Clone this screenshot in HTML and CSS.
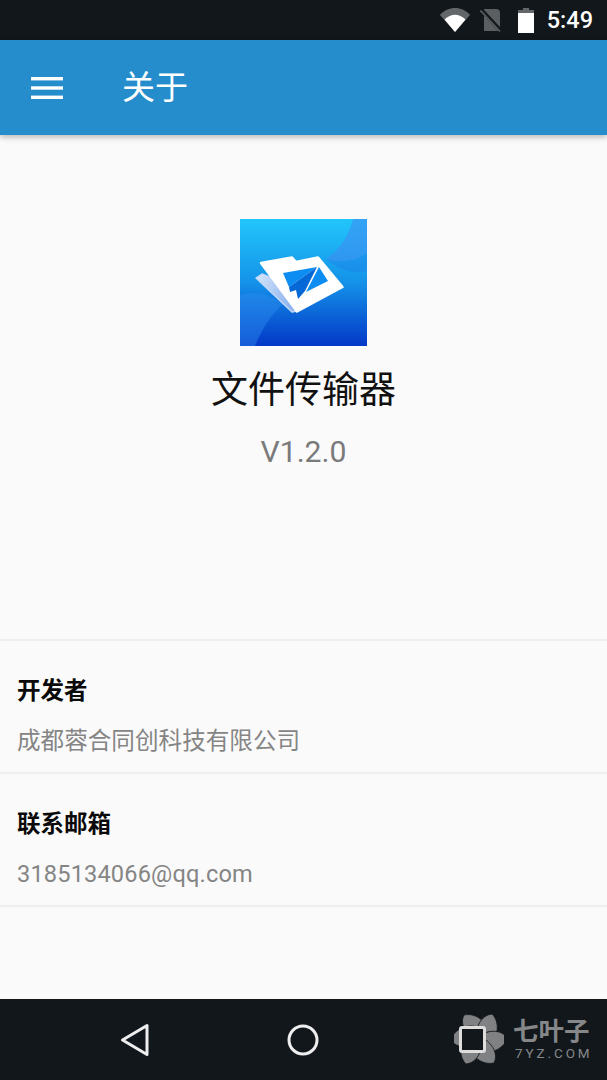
FILE: index.html
```html
<!doctype html>
<html lang="zh-CN">
<head>
  <meta charset="utf-8">
  <title>关于</title>
  <link rel="stylesheet" href="styles.css">
</head>
<body>
  <div class="screen">
    <div class="status-bar">
      <svg class="wifi" width="30" height="24" viewBox="0 0 30 24">
        <path d="M0 7 C8 -2.3 22 -2.3 30 7 L15 24 Z" fill="#646769"/>
        <path d="M4.5 11.5 C11 5 19 5 25.5 11.5 L15 24 Z" fill="#fff"/>
      </svg>
      <svg class="sim" width="22" height="24" viewBox="0 0 22 24">
        <path d="M4 1 H16 Q20 1 20 5 V23 H4 Z" fill="#5c5f62"/>
        <path d="M1.5 2 L21 23" stroke="#12171c" stroke-width="4"/>
        <path d="M0.5 2.5 L20 23.5" stroke="#5c5f62" stroke-width="1.6"/>
      </svg>
      <svg class="battery" width="16" height="25" viewBox="0 0 16 25">
        <path d="M5 0 H11 V2 H16 V5 H0 V2 H5 Z" fill="#646769"/>
        <rect x="0" y="5" width="16" height="20" fill="#fff"/>
      </svg>
      <span class="clock">5:49</span>
    </div>

    <header class="app-bar">
      <svg class="menu-icon" width="32" height="22" viewBox="0 0 32 22">
        <rect x="0" y="0" width="32" height="3.4" fill="#fff"/>
        <rect x="0" y="9.3" width="32" height="3.4" fill="#fff"/>
        <rect x="0" y="18.6" width="32" height="3.4" fill="#fff"/>
      </svg>
      <h1 class="app-title">关于</h1>
    </header>

    <main class="content">
      <section class="about">
        <svg class="app-logo" width="127" height="127" viewBox="0 0 127 127">
          <defs>
            <linearGradient id="logo-bg" x1="0" y1="0" x2="0" y2="1">
              <stop offset="0" stop-color="#22c6fb"/>
              <stop offset="0.5" stop-color="#1492e8"/>
              <stop offset="1" stop-color="#0338c8"/>
            </linearGradient>
            <linearGradient id="logo-sheet" x1="0" y1="0" x2="1" y2="0.4">
              <stop offset="0" stop-color="#d6e6fb"/>
              <stop offset="1" stop-color="#8fb4ee"/>
            </linearGradient>
          </defs>
          <rect width="127" height="127" fill="url(#logo-bg)"/>
          <path d="M113 0 C108 20 98 32 86 40 C100 44 115 43 127 34 L127 0 Z" fill="#3f8ef2" opacity="0.6"/>
          <path d="M86 40 C100 44 115 43 127 34 L127 52 C112 56 98 50 86 40 Z" fill="#1f7ce8" opacity="0.4"/>
          <path d="M0 76 C15 72 30 75 43 85 C30 97 22 110 15 127 L0 127 Z" fill="#2f8cf0" opacity="0.45"/>
          <path d="M16 59 L22 55 L32 59 L57 92 L52 93 Z" fill="url(#logo-sheet)" stroke="#c4d9f7" stroke-width="1.5" stroke-linejoin="round"/>
          <path d="M21 44 L52 38.5 L56 43 L78 38.5 L102.5 68 L57 92.5 Z" fill="#fff" stroke="#fff" stroke-width="2.5" stroke-linejoin="round"/>
          <path d="M43 54 L77 48 L49 68 Z" fill="#0d8df2"/>
          <path d="M49 68 L77 48 L65 72 L58 80 L56 71 L50 73 Z" fill="#0568d6"/>
          <path d="M79 48 L88 62 L66 73 Z" fill="#0d8df2"/>
        </svg>
        <h2 class="about-name">文件传输器</h2>
        <p class="about-version">V1.2.0</p>
      </section>

      <section class="info-row">
        <div class="info-label">开发者</div>
        <div class="info-value">成都蓉合同创科技有限公司</div>
      </section>
      <section class="info-row">
        <div class="info-label">联系邮箱</div>
        <div class="info-value info-mail">3185134066@qq.com</div>
      </section>
    </main>

    <nav class="nav-bar">
      <svg class="nav-back" width="30" height="34" viewBox="0 0 30 34">
        <path d="M2.5 17 L27 2.5 V31.5 Z" fill="none" stroke="#eee" stroke-width="3" stroke-linejoin="round"/>
      </svg>
      <svg class="nav-home" width="32" height="32" viewBox="0 0 32 32">
        <circle cx="16" cy="16" r="14" fill="none" stroke="#eee" stroke-width="3"/>
      </svg>
      <svg class="nav-recent" width="27" height="27" viewBox="0 0 27 27">
        <rect x="1.5" y="1.5" width="24" height="24" rx="1.5" fill="#12171c" stroke="#ddd" stroke-width="3"/>
      </svg>
    </nav>

    <div class="watermark">
      <svg class="watermark-leaf" width="50" height="50" viewBox="0 0 50 50">
        <defs>
          <path id="leaf-blade" d="M25 28 C13 23 5 11 10 1 C24 -2 37 11 35 26 Z"/>
        </defs>
        <g fill="#7f8182" stroke="#12171c" stroke-width="0.8">
          <use href="#leaf-blade"/>
          <use href="#leaf-blade" transform="rotate(60 25 25)"/>
          <use href="#leaf-blade" transform="rotate(120 25 25)"/>
          <use href="#leaf-blade" transform="rotate(180 25 25)"/>
          <use href="#leaf-blade" transform="rotate(240 25 25)"/>
          <use href="#leaf-blade" transform="rotate(300 25 25)"/>
        </g>
      </svg>
      <div class="watermark-text">
        <span class="watermark-cn">七叶子</span>
        <span class="watermark-en">7YZ.COM</span>
      </div>
    </div>
  </div>
</body>
</html>
```

FILE: styles.css
```css
html, body {
  margin: 0;
  padding: 0;
  background: #fafafa;
}
.screen {
  position: relative;
  display: flex;
  flex-flow: column nowrap;
  width: 607px;
  height: 1080px;
  overflow: hidden;
  font-family: Roboto, "Noto Sans CJK SC", sans-serif;
}
.status-bar {
  flex: none;
  height: 40px;
  display: flex;
  align-items: center;
  justify-content: flex-end;
  padding-right: 14px;
  background: #12171c;
  color: #fff;
}
.wifi {
  margin-right: 10px;
}
.sim {
  margin-right: 16px;
}
.battery {
  margin-right: 13px;
}
.clock {
  font-size: 23.5px;
  font-weight: 500;
  line-height: 40px;
}
.app-bar {
  position: relative;
  z-index: 1;
  flex: none;
  height: 95px;
  display: flex;
  align-items: center;
  padding-left: 31px;
  background: #268dcd;
  box-shadow: 0 2px 6px rgba(0, 0, 0, 0.28);
}
.menu-icon {
  margin-right: 59px;
}
.app-title {
  margin: 0;
  font-size: 33px;
  font-weight: 400;
  line-height: 46px;
  color: #fff;
}
.content {
  flex: auto;
  background: #fafafa;
}
.about {
  height: 504px;
  display: flex;
  flex-flow: column nowrap;
  align-items: center;
  box-sizing: border-box;
  padding-top: 84px;
}
.app-logo {
  display: block;
}
.about-name {
  margin: 18px 0 0;
  font-size: 37px;
  font-weight: 400;
  line-height: 54px;
  color: #111;
}
.about-version {
  margin: 14px 0 0;
  font-size: 30.2px;
  line-height: 40px;
  color: #7a7a7a;
}
.info-row {
  height: 133px;
  box-sizing: border-box;
  padding: 33px 17px 0;
  border-top: 2px solid #efefef;
}
.info-row:last-child {
  height: 135px;
  border-bottom: 2px solid #efefef;
}
.info-label {
  font-size: 23.5px;
  font-weight: 700;
  line-height: 34px;
  color: #0a0a0a;
}
.info-value {
  margin-top: 16px;
  font-size: 23.6px;
  line-height: 34px;
  color: #858585;
}
.info-mail {
  letter-spacing: 0.15px;
}
.nav-bar {
  flex: none;
  height: 81px;
  display: flex;
  align-items: center;
  background: #12171c;
}
.nav-back {
  margin-left: 120px;
}
.nav-home {
  margin-left: 137px;
}
.nav-recent {
  position: relative;
  z-index: 2;
  margin-left: 140px;
}
.watermark {
  position: absolute;
  left: 454px;
  top: 1014px;
  display: flex;
  align-items: center;
}
.watermark-text {
  display: flex;
  flex-flow: column nowrap;
  margin-left: 9px;
  color: #858789;
}
.watermark-cn {
  font-size: 25.5px;
  font-weight: 700;
  line-height: 28px;
}
.watermark-en {
  margin-left: 2px;
  font-size: 13.5px;
  line-height: 16px;
  letter-spacing: 2.9px;
}
```
